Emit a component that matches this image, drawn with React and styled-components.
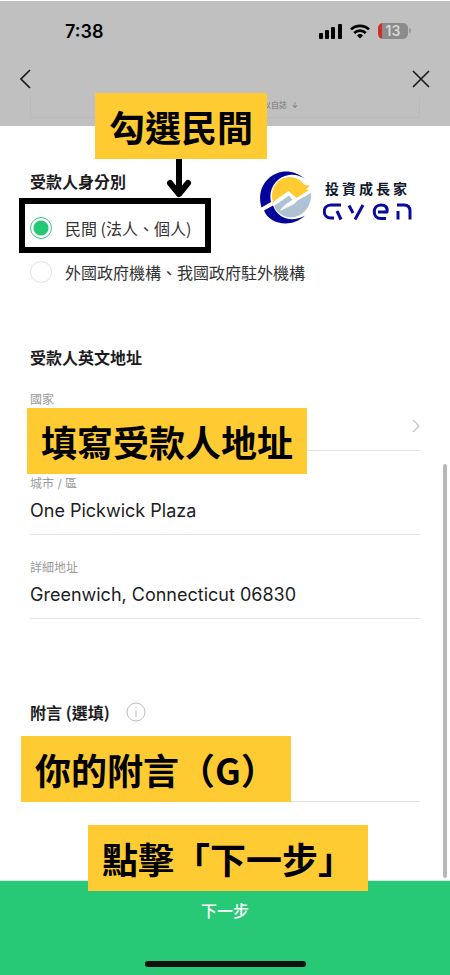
import React, { useState } from 'react';
import styled, { createGlobalStyle } from 'styled-components';

const GlobalStyle = createGlobalStyle`
  * {
    box-sizing: border-box;
  }

  body {
    margin: 0;
    background: #fff;
    color: #1c1c1e;
    font-family: Inter, 'Noto Sans CJK TC', sans-serif;
  }
`;

const Screen = styled.div`
  position: relative;
  display: flex;
  flex-direction: column;
  min-height: 100vh;
  padding-top: 1px;
`;

const Header = styled.header`
  height: 125px;
  background: #c0c0c0;
  overflow: hidden;
`;

const StatusBar = styled.div`
  display: flex;
  align-items: center;
  justify-content: space-between;
  height: 60px;
  padding: 0 42px 0 65px;
`;

const Clock = styled.span`
  font-size: 18px;
  font-weight: 600;
  color: #000;
`;

const StatusIcons = styled.div`
  display: flex;
  align-items: center;
  gap: 8px;
`;

const Battery = styled.div`
  position: relative;
  width: 30px;
  height: 16px;
  border-radius: 5px;
  background: linear-gradient(to right, #cf2f2c 4px, #8b8b8b 4px);
  color: #d6d6d6;
  font-size: 14px;
  font-weight: 600;
  line-height: 16px;
  text-align: center;

  &::after {
    content: '';
    position: absolute;
    top: 5px;
    right: -3px;
    width: 2px;
    height: 5px;
    border-radius: 0 2px 2px 0;
    background: #979797;
  }
`;

const NavBar = styled.nav`
  display: flex;
  align-items: center;
  justify-content: space-between;
  height: 36px;
  padding: 0 20px;
`;

const IconButton = styled.button`
  display: flex;
  padding: 0;
  border: none;
  background: none;
  color: #1c1c1e;
  cursor: pointer;
`;

const NoticeCard = styled.div`
  height: 21px;
  margin: 0 30px;
  padding: 3px 0 0 232px;
  border: 1px solid #b9b9b9;
  border-top: none;
  border-radius: 0 0 2px 2px;
  color: #777;
  font-size: 8px;
  line-height: 10px;
  white-space: pre;
`;

const Form = styled.form`
  flex: 1;
  display: flex;
  flex-direction: column;
`;

const Main = styled.main`
  flex: 1;
  padding: 45px 30px 70px;
`;

const Section = styled.section`
  position: relative;
  margin-bottom: ${({ $gap }) => $gap || 0}px;
`;

const SectionTitle = styled.h2`
  display: flex;
  align-items: center;
  gap: 16px;
  margin: 0;
  font-family: 'Noto Sans CJK TC', sans-serif;
  font-size: 16px;
  font-weight: 700;
  line-height: 20px;
`;

const Options = styled.div`
  display: flex;
  flex-direction: column;
  gap: 20px;
  margin-top: 25px;
`;

const Option = styled.label`
  display: flex;
  align-items: center;
  gap: 13px;
  height: 24px;
  color: #333;
  font-family: 'Noto Sans CJK TC', sans-serif;
  font-size: 16px;
  line-height: 24px;
  white-space: nowrap;
  cursor: pointer;
`;

const Radio = styled.input`
  appearance: none;
  flex: none;
  width: 22px;
  height: 22px;
  margin: 0;
  border: 1px solid #e0e0e0;
  border-radius: 50%;

  &:checked {
    border: 1px solid #3fc283;
    background: radial-gradient(circle, #25c973 7px, #fff 8px);
  }
`;

const Highlight = styled.div`
  position: absolute;
  top: 27px;
  left: -11px;
  width: 192px;
  height: 55px;
  border: 6px solid #000;
  pointer-events: none;
`;

const Callout = styled.div`
  position: absolute;
  top: ${({ $top }) => $top}px;
  left: ${({ $left }) => $left}px;
  padding: 13px 14px;
  background: #ffcb33;
  color: #000;
  font-family: 'Noto Sans CJK TC', sans-serif;
  font-size: 36px;
  font-weight: 700;
  line-height: 40px;
  white-space: nowrap;
  z-index: 1;
`;

const Arrow = styled.svg`
  position: absolute;
  top: -12px;
  left: 136px;
`;

const Brand = styled.div`
  position: absolute;
  top: 0;
  right: 8px;
  display: flex;
  gap: 12px;
`;

const BrandText = styled.div`
  display: flex;
  flex-direction: column;
  gap: 5px;
  padding-top: 9px;
`;

const BrandName = styled.span`
  padding-left: 2px;
  color: #10182c;
  font-size: 14px;
  font-weight: 700;
  line-height: 18px;
  letter-spacing: 3px;
`;

const Field = styled.div`
  position: relative;
  display: flex;
  flex-direction: column;
  height: 84px;
  padding-top: 24px;
  border-bottom: 1px solid #e6e6e6;
`;

const FieldLabel = styled.label`
  color: #9a9a9a;
  font-size: 12px;
  line-height: 18px;
`;

const Input = styled.input`
  width: 100%;
  height: 34px;
  padding: 0;
  border: none;
  outline: none;
  background: transparent;
  color: #1c1c1e;
  font-family: inherit;
  font-size: 18px;
`;

const Select = styled(Input).attrs({ as: 'select' })`
  appearance: none;
`;

const Chevron = styled.svg`
  position: absolute;
  right: 0;
  top: 52px;
  pointer-events: none;
`;

const NoteInput = styled(Input)`
  height: 80px;
  border-bottom: 1px solid #e0e0e0;
`;

const ScrollThumb = styled.div`
  position: absolute;
  top: 464px;
  right: 3px;
  bottom: 97px;
  width: 4px;
  border-radius: 2px;
  background: #b8b8b8;
`;

const Submit = styled.button`
  display: flex;
  flex-direction: column;
  align-items: center;
  justify-content: space-between;
  height: 95px;
  padding: 18px 0 8px;
  border: none;
  border-top: 1px solid #d8e6de;
  background: #27c977;
  color: #fff;
  font-family: inherit;
  font-size: 16px;
  font-weight: 500;
  line-height: 24px;
  cursor: pointer;
`;

const HomeIndicator = styled.span`
  width: 161px;
  height: 6px;
  border-radius: 3px;
  background: #111;
`;

const SignalIcon = () => (
  <svg width="23" height="15" viewBox="0 0 23 15" aria-hidden="true">
    <rect x="0" y="9" width="4" height="6" rx="1" />
    <rect x="6" y="6" width="4" height="9" rx="1" />
    <rect x="12" y="3" width="4" height="12" rx="1" />
    <rect x="19" y="0" width="4" height="15" rx="1" />
  </svg>
);

const WifiIcon = () => (
  <svg width="20" height="15" viewBox="0 0 20 15" fill="none" stroke="#000" strokeWidth="2.7" aria-hidden="true">
    <path d="M1 5.4a13 13 0 0 1 18 0" />
    <path d="M4.2 9a8.4 8.4 0 0 1 11.6 0" />
    <path d="M10 14.6l-3-3.1a4.4 4.4 0 0 1 6 0z" fill="#000" stroke="none" />
  </svg>
);

const MountainLogo = () => (
  <svg width="51" height="53" viewBox="0 0 51 53" aria-hidden="true">
    <path d="M45 8C34-2 18-2 8 8C-1 17-1 28 1.500 36.500L11 31C8 18 16 6 29 4C35 3 41 5 45 8Z" fill="#04049b" />
    <path d="M4 39.500L13 34.500C18 48 32 52 45 44.500C31 58 9 53 4 39.500Z" fill="#04049b" />
    <path d="M12.500 29C10 17 18 6.500 29 6C36 6 41 9 44.500 14L50 14.500L46 18.500L49 19L36.500 27L28.500 20L13 31Z" fill="#ffcb33" />
    <path d="M14 35L29 24.500L32.500 29L26 33L21 38L20 40L34 33L37.500 29.500L51 22C52 36 42 47 30 46.500C22 46 17 41 14 35Z" fill="#afc2d3" />
  </svg>
);

const AvenMark = () => (
  <svg width="89" height="18" viewBox="0 0 89 18" fill="none" stroke="#0a0a9c" strokeWidth="3" strokeLinejoin="round" role="img" aria-label="aven">
    <path d="M18 2H8C-1 2-1 15 8 15H11M14 8L18 16.500" />
    <path d="M26 2.500L30 10M40 2L32 16.500" />
    <path d="M55 9H64C65 4 62 2 58 2C49 2 49 15.500 58 15.500H63" />
    <path d="M75 16.500V8M74 2H81C85 2 87 4 87 8V16.500" />
  </svg>
);

const recipientTypes = [
  { value: 'private', label: '民間 (法人、個人)' },
  { value: 'government', label: '外國政府機構、我國政府駐外機構' },
];

const App = () => {
  const [type, setType] = useState('private');
  const [country, setCountry] = useState('');
  const [city, setCity] = useState('One Pickwick Plaza');
  const [address, setAddress] = useState('Greenwich, Connecticut 06830');
  const [note, setNote] = useState('');

  return (
    <>
      <GlobalStyle />
      <Screen>
        <Header>
          <StatusBar>
            <Clock>7:38</Clock>
            <StatusIcons>
              <SignalIcon />
              <WifiIcon />
              <Battery>13</Battery>
            </StatusIcons>
          </StatusBar>
          <NavBar>
            <IconButton type="button" aria-label="返回">
              <svg width="11" height="20" viewBox="0 0 11 20" fill="none" stroke="currentColor" strokeWidth="1.7">
                <path d="M10 1L1 10l9 9" />
              </svg>
            </IconButton>
            <IconButton type="button" aria-label="關閉">
              <svg width="18" height="18" viewBox="0 0 18 18" fill="none" stroke="currentColor" strokeWidth="1.7">
                <path d="M1 1l16 16M17 1L1 17" />
              </svg>
            </IconButton>
          </NavBar>
          <NoticeCard>以自誌  ↓</NoticeCard>
        </Header>

        <Form onSubmit={(e) => e.preventDefault()}>
          <Main>
            {/* Recipient type */}
            <Section $gap={63}>
              <SectionTitle>受款人身分別</SectionTitle>
              <Options role="radiogroup" aria-label="受款人身分別">
                {recipientTypes.map((item) => (
                  <Option key={item.value}>
                    <Radio
                      type="radio"
                      name="recipientType"
                      value={item.value}
                      checked={type === item.value}
                      onChange={() => setType(item.value)}
                    />
                    {item.label}
                  </Option>
                ))}
              </Options>
              <Highlight />
              <Callout $top={-78} $left={65}>勾選民間</Callout>
              <Arrow width="26" height="40" viewBox="0 0 26 40" fill="none" stroke="#000" strokeWidth="6">
                <path d="M13 0v35" />
                <path d="M4 24l9 11 9-11" strokeLinecap="round" strokeLinejoin="round" />
              </Arrow>
              <Brand>
                <MountainLogo />
                <BrandText>
                  <BrandName>投資成長家</BrandName>
                  <AvenMark />
                </BrandText>
              </Brand>
            </Section>

            {/* Recipient address */}
            <Section $gap={83}>
              <SectionTitle>受款人英文地址</SectionTitle>
              <Field>
                <FieldLabel htmlFor="country">國家</FieldLabel>
                <Select id="country" value={country} onChange={(e) => setCountry(e.target.value)}>
                  <option value="" />
                </Select>
                <Chevron width="8" height="14" viewBox="0 0 8 14" fill="none" stroke="#c4c4c4" strokeWidth="1.3">
                  <path d="M1 1l6 6-6 6" />
                </Chevron>
              </Field>
              <Field>
                <FieldLabel htmlFor="city">城市 / 區</FieldLabel>
                <Input id="city" type="text" value={city} onChange={(e) => setCity(e.target.value)} />
              </Field>
              <Field>
                <FieldLabel htmlFor="address">詳細地址</FieldLabel>
                <Input id="address" type="text" value={address} onChange={(e) => setAddress(e.target.value)} />
              </Field>
              <Callout $top={61} $left={-3}>填寫受款人地址</Callout>
            </Section>

            {/* Note */}
            <Section>
              <SectionTitle>
                <label htmlFor="note">附言 (選填)</label>
                <IconButton type="button" aria-label="附言說明">
                  <svg width="20" height="20" viewBox="0 0 20 20" fill="none" stroke="#bdbdbd">
                    <circle cx="10" cy="10" r="9" />
                    <path d="M10 8v7M10 5v1" />
                  </svg>
                </IconButton>
              </SectionTitle>
              <NoteInput id="note" type="text" value={note} onChange={(e) => setNote(e.target.value)} />
              <Callout $top={34} $left={-9}>你的附言（G）</Callout>
              <Callout $top={123} $left={58}>點擊「下一步」</Callout>
            </Section>
          </Main>

          <Submit type="submit">
            下一步
            <HomeIndicator />
          </Submit>
        </Form>
        <ScrollThumb />
      </Screen>
    </>
  );
};

export default App;
